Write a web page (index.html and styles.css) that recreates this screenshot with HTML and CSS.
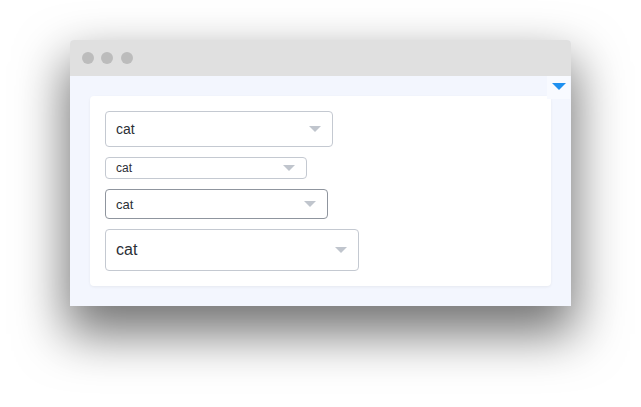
FILE: index.html
```html
<!DOCTYPE html>
<html>
<head>
<meta charset="utf-8">
<link rel="stylesheet" href="styles.css">
</head>
<body>
<div class="stage">
  <div class="window">
    <div class="titlebar">
      <span class="dot"></span><span class="dot"></span><span class="dot"></span>
    </div>
    <div class="content">
      <div class="toggle"><span class="tri-blue"></span></div>
      <div class="card">
        <div class="select s-default"><span class="label">cat</span><span class="tri"></span></div>
        <div class="select s-small"><span class="label">cat</span><span class="tri"></span></div>
        <div class="select s-mid"><span class="label">cat</span><span class="tri"></span></div>
        <div class="select s-large"><span class="label">cat</span><span class="tri"></span></div>
      </div>
    </div>
  </div>
</div>
</body>
</html>
```
FILE: styles.css
```css
html, body {
  margin: 0;
  padding: 0;
  background: #ffffff;
  font-family: "Liberation Sans", Arial, sans-serif;
}
.stage {
  width: 641px;
  height: 407px;
  padding: 40px 0 0 70px;
  box-sizing: border-box;
}
.window {
  width: 501px;
  height: 266px;
  border-radius: 4px 4px 0 0;
  box-shadow: 0 24px 50px 4px rgba(0, 0, 0, 0.55);
  background: #f3f6fe;
  display: flex;
  flex-direction: column;
}
.titlebar {
  height: 36px;
  background: #e0e0e0;
  border-radius: 4px 4px 0 0;
  display: flex;
  align-items: center;
  gap: 7px;
  padding-left: 12px;
}
.dot {
  width: 12px;
  height: 12px;
  border-radius: 50%;
  background: #bcbcbc;
}
.dot:nth-child(3) {
  margin-left: 1px;
}
.content {
  position: relative;
  flex: 1;
  padding: 20px 20px 0 20px;
}
.toggle {
  position: absolute;
  top: 0;
  right: 1px;
  width: 23px;
  height: 23px;
  background: #f8faff;
  display: flex;
  align-items: center;
  justify-content: center;
}
.tri-blue {
  width: 0;
  height: 0;
  border-left: 7px solid transparent;
  border-right: 7px solid transparent;
  border-top: 7px solid #1e90f0;
  margin-top: -2px;
}
.card {
  background: #fff;
  border-radius: 4px;
  box-shadow: 0 1px 3px rgba(0, 0, 0, 0.06);
  padding: 15px;
  display: flex;
  flex-direction: column;
  align-items: flex-start;
  gap: 10px;
}
.select {
  box-sizing: border-box;
  border: 1px solid #c4c9d1;
  border-radius: 4px;
  display: flex;
  align-items: center;
  justify-content: space-between;
  color: #2b2f36;
  background: #fff;
  padding: 0 11px 0 10px;
}
.tri {
  width: 0;
  height: 0;
  border-left: 6px solid transparent;
  border-right: 6px solid transparent;
  border-top: 6px solid #c0c5cd;
}
.s-default {
  width: 228px;
  height: 36px;
  font-size: 14px;
}
.s-small {
  width: 202px;
  height: 22px;
  font-size: 12px;
}
.s-mid {
  width: 223px;
  height: 30px;
  font-size: 13px;
  border-color: #8f959e;
}
.s-large {
  width: 254px;
  height: 42px;
  font-size: 16px;
}
```
